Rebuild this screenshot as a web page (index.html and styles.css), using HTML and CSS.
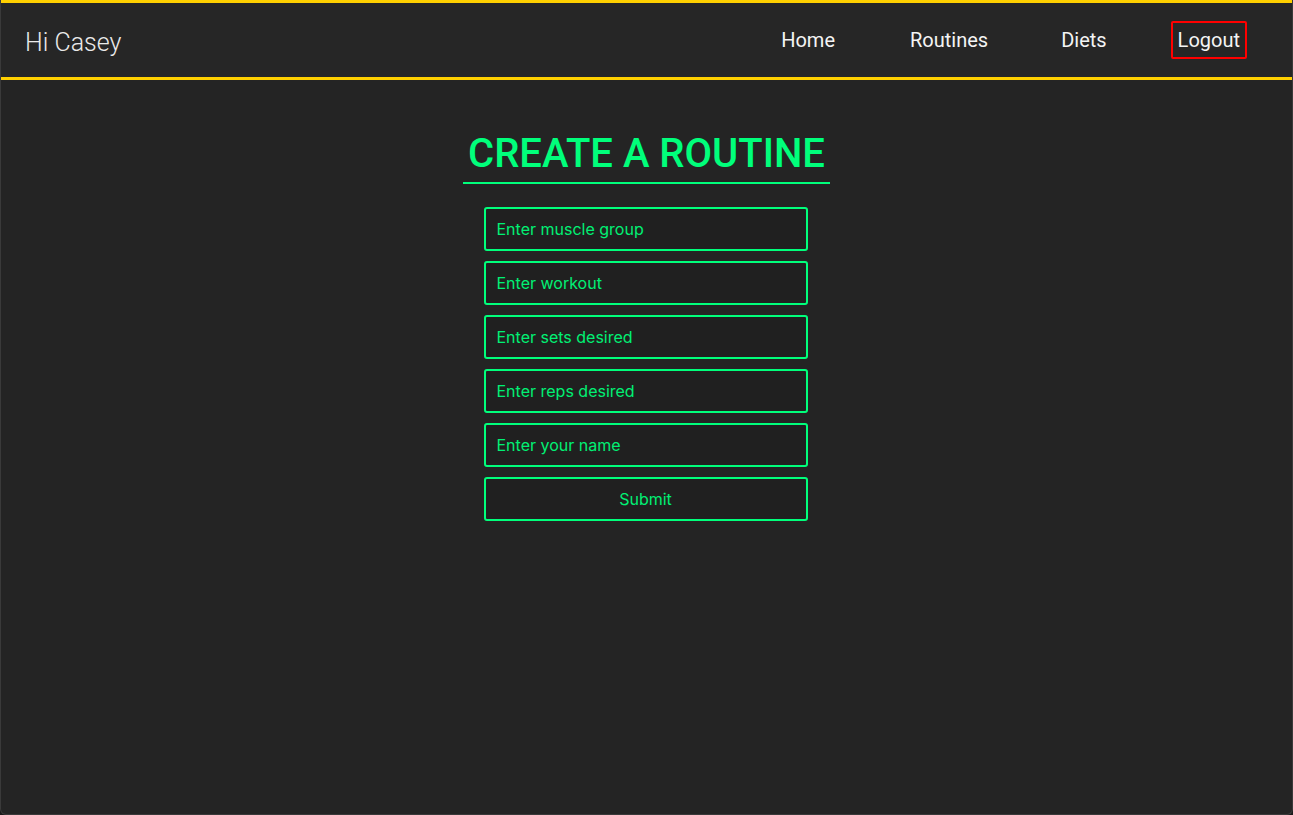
FILE: index.html
```html
<!DOCTYPE html>
<html>
<head>
<meta charset="utf-8">
<link rel="stylesheet" href="styles.css">
</head>
<body>
<div class="frame">
  <header class="nav">
    <div class="greet">Hi Casey</div>
    <nav class="links">
      <a class="link">Home</a>
      <a class="link">Routines</a>
      <a class="link diets">Diets</a>
      <a class="link logout">Logout</a>
    </nav>
  </header>
  <main class="content">
    <h1 class="title">CREATE A ROUTINE</h1>
    <form class="form">
      <input class="field" placeholder="Enter muscle group">
      <input class="field" placeholder="Enter workout">
      <input class="field" placeholder="Enter sets desired">
      <input class="field" placeholder="Enter reps desired">
      <input class="field" placeholder="Enter your name">
      <button type="button" class="field submit">Submit</button>
    </form>
  </main>
</div>
</body>
</html>
```

FILE: styles.css
```css
html, body {
  margin: 0;
  padding: 0;
  height: 100%;
  background: #1a1a1a;
}
.frame {
  height: 815px;
  box-sizing: border-box;
  background: #242424;
  border: 1px solid #3a3a3a;
  border-top: none;
  border-radius: 0 0 6px 6px;
  display: flex;
  flex-direction: column;
  overflow: hidden;
}
.nav {
  height: 74px;
  background: #262626;
  border-top: 3px solid #ffd000;
  border-bottom: 3px solid #ffd000;
  display: flex;
  align-items: center;
  justify-content: space-between;
  padding: 0 45px 0 24px;
  font-family: Roboto, "Liberation Sans", sans-serif;
}
.greet {
  color: #eaeaea;
  font-size: 25px;
  font-weight: 300;
  margin-top: 4px;
}
.links {
  display: flex;
  align-items: center;
}
.link {
  color: #f4f4f4;
  font-size: 20px;
  font-weight: 400;
  margin-left: 61px;
  padding: 5px 5px;
  border: 2px solid transparent;
  border-radius: 2px;
  line-height: 24px;
}
.link:first-child { margin-left: 0; }
.diets { margin-left: 59px; }
.logout {
  border-color: #ff0000;
  margin-left: 57px;
}
.content {
  display: flex;
  flex-direction: column;
  align-items: center;
  padding-top: 51px;
}
.title {
  margin: 0;
  font-family: Roboto, "Liberation Sans", sans-serif;
  font-weight: 500;
  font-size: 40px;
  color: #00ff7b;
  padding: 0 5px 5px;
  border-bottom: 2px solid #00ff7b;
  line-height: 46px;
}
.form {
  display: flex;
  flex-direction: column;
  gap: 10px;
  margin-top: 23px;
  margin-right: 2px;
}
.field {
  width: 324px;
  height: 44px;
  box-sizing: border-box;
  background: #202020;
  border: 2px solid #00ff7b;
  border-radius: 3px;
  color: #00ff7b;
  font-family: Inter, "Noto Sans", sans-serif;
  font-size: 16px;
  padding: 0 11px;
  outline: none;
}
.field::placeholder {
  color: #00f074;
  opacity: 1;
}
.submit {
  color: #00f074;
  text-align: center;
  cursor: pointer;
}
```
